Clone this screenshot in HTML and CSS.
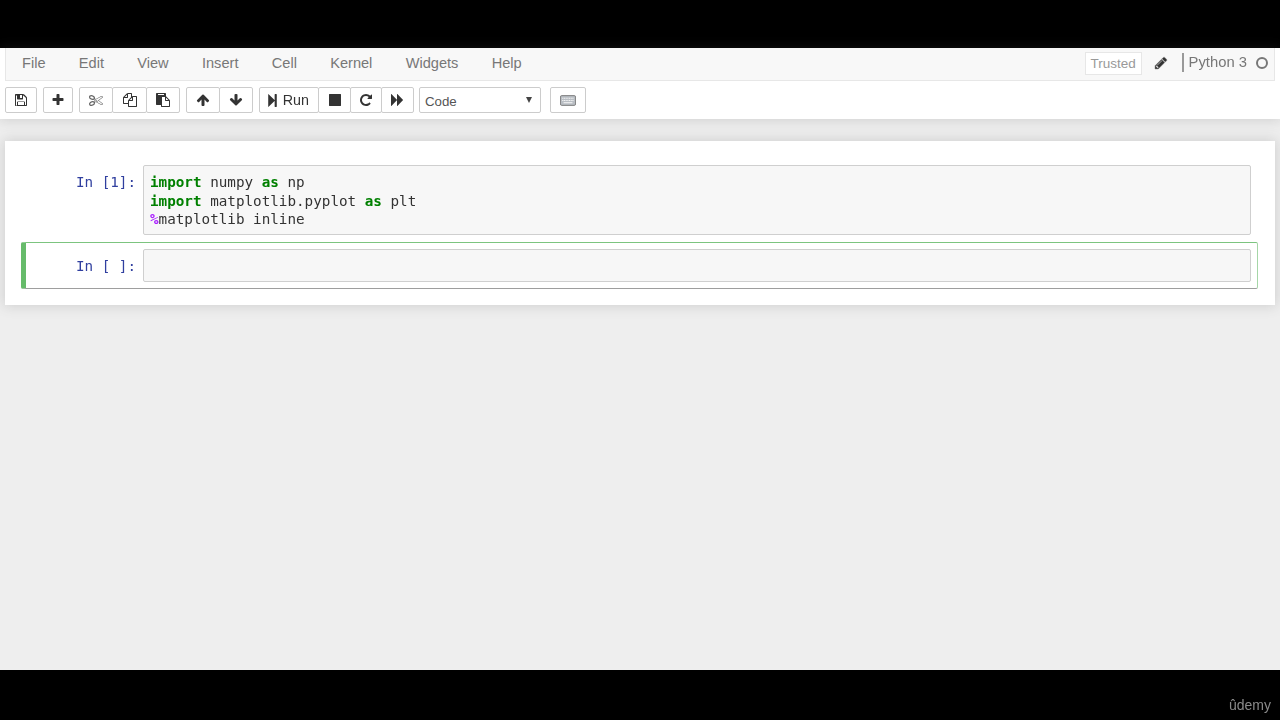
FILE: index.html
```html
<!DOCTYPE html>
<html lang="en">
<head>
<meta charset="utf-8">
<title>Notebook</title>
<link rel="stylesheet" href="styles.css">
</head>
<body>
<div class="letterbox-top"></div>
<header class="header">
  <nav class="menubar">
    <ul class="menu">
      <li>File</li><li>Edit</li><li>View</li><li>Insert</li><li>Cell</li><li>Kernel</li><li>Widgets</li><li>Help</li>
    </ul>
    <div class="status">
      <span class="trusted">Trusted</span>
      <svg class="ico pencil" viewBox="0 0 1792 1792"><path d="M491 1536l91-91-235-235-91 91v107h128v128h107zm523-928q0-22-22-22-10 0-17 7l-542 542q-7 7-7 17 0 22 22 22 10 0 17-7l542-542q7-7 7-17zm-54-192l416 416-832 832h-416v-416zm683 96q0 53-37 90l-166 166-416-416 166-165q36-38 90-38 53 0 91 38l235 234q37 39 37 91z"/></svg>
      <span class="kernel">Python 3</span>
      <span class="kernel-dot"></span>
    </div>
  </nav>
  <div class="toolbar">
    <div class="group"><button class="btn w-save"><svg class="ico" viewBox="0 0 1792 1792"><path d="M512 1536h768v-384h-768v384zm896 0h128v-840q0-14-10-38.500t-20-34.500l-281-281q-10-10-34-20t-39-10v416q0 40-28 68t-68 28h-576q-40 0-68-28t-28-68v-416h-128v1280h128v-416q0-40 28-68t68-28h832q40 0 68 28t28 68v416zm-384-928v-320q0-13-9.500-22.500t-22.500-9.500h-192q-13 0-22.500 9.500t-9.500 22.500v320q0 13 9.500 22.500t22.500 9.500h192q13 0 22.500-9.500t9.500-22.500zm640 32v928q0 40-28 68t-68 28h-1344q-40 0-68-28t-28-68v-1344q0-40 28-68t68-28h928q40 0 88 20t76 48l280 280q28 28 48 76t20 88z"/></svg></button></div>
    <div class="group"><button class="btn w-add"><svg class="ico" viewBox="0 0 1792 1792"><path d="M1600 736v192q0 40-28 68t-68 28h-416v416q0 40-28 68t-68 28h-192q-40 0-68-28t-28-68v-416h-416q-40 0-68-28t-28-68v-192q0-40 28-68t68-28h416v-416q0-40 28-68t68-28h192q40 0 68 28t28 68v416h416q40 0 68 28t28 68z"/></svg></button></div>
    <div class="group">
      <button class="btn w-edit"><svg class="ico light" viewBox="0 0 1792 1792"><path d="M960 896q26 0 45 19t19 45-19 45-45 19-45-19-19-45 19-45 45-19zm300 64l507 398q28 20 25 56-5 35-35 51l-128 64q-13 7-29 7-17 0-31-8l-690-387-110 66q-8 4-12 5 14 49 10 97-7 77-56 147.500t-132 123.500q-132 84-277 84-136 0-222-78-90-84-79-207 7-76 56-147t131-124q132-84 278-84 83 0 151 31 9-13 22-22l122-73-122-73q-13-9-22-22-68 31-151 31-146 0-278-84-82-53-131-124t-56-147q-5-59 15.500-113t63.500-93q85-79 222-79 145 0 277 84 83 52 132 123t56 148q4 48-10 97 4 1 12 5l110 66 690-387q14-8 31-8 16 0 29 7l128 64q30 16 35 51 3 36-25 56zm-681-260q46-42 21-108t-106-117q-92-59-192-59-74 0-113 36-46 42-21 108t106 117q92 59 192 59 74 0 113-36zm-85 745q81-51 106-117t-21-108q-39-36-113-36-100 0-192 59-81 51-106 117t21 108q39 36 113 36 100 0 192-59zm178-613l96 58v-11q0-36 33-56l14-8-79-47-26 26q-3 3-10 11t-12 12q-2 2-4 3.500t-3 2.500zm224 224l96 32 736-576-128-64-768 431v113l-160 96 9 8q2 2 7 6 4 4 11 12t11 12l26 26zm704 416l128-64-520-408-177 138q-2 3-13 7z"/></svg></button>
      <button class="btn w-edit"><svg class="ico copy" viewBox="0 0 1792 1792"><path d="M1696 384q40 0 68 28t28 68v1216q0 40-28 68t-68 28h-960q-40 0-68-28t-28-68v-288h-544q-40 0-68-28t-28-68v-672q0-40 20-88t48-76l408-408q28-28 76-48t88-20h416q40 0 68 28t28 68v328q68-40 128-40h416zm-544 213l-299 299h299v-299zm-640-384l-299 299h299v-299zm196 647l316-316v-416h-384v416q0 40-28 68t-68 28h-416v640h512v-256q0-40 20-88t48-76zm956 804v-1152h-384v416q0 40-28 68t-68 28h-416v640h896z"/></svg></button>
      <button class="btn w-edit"><svg class="ico" viewBox="0 0 1792 1792"><path d="M768 1664h896v-640h-416q-40 0-68-28t-28-68v-416h-384v1152zm256-1440v-64q0-13-9.500-22.500t-22.500-9.500h-704q-13 0-22.500 9.500t-9.500 22.500v64q0 13 9.500 22.500t22.500 9.500h704q13 0 22.500-9.500t9.500-22.500zm256 672h299l-299-299v299zm512 128v672q0 40-28 68t-68 28h-960q-40 0-68-28t-28-68v-160h-544q-40 0-68-28t-28-68v-1344q0-40 28-68t68-28h1088q40 0 68 28t28 68v328q21 13 36 28l408 408q28 28 48 76t20 88z"/></svg></button>
    </div>
    <div class="group">
      <button class="btn w-move"><svg class="ico" viewBox="0 0 1792 1792"><path d="M1675 971q0 51-37 90l-75 75q-38 38-91 38-54 0-90-38l-294-293v704q0 52-37.500 84.500t-90.500 32.500h-128q-53 0-90.500-32.500t-37.500-84.500v-704l-294 293q-36 38-90 38t-90-38l-75-75q-38-38-38-90 0-53 38-91l651-651q35-37 90-37 54 0 91 37l651 651q37 39 37 91z"/></svg></button>
      <button class="btn w-move"><svg class="ico" viewBox="0 0 1792 1792"><path d="M1675 832q0 53-37 90l-651 652q-39 37-91 37-53 0-90-37l-651-652q-38-36-38-90 0-53 38-91l74-75q39-37 91-37 53 0 90 37l294 294v-704q0-52 38-90t90-38h128q52 0 90 38t38 90v704l294-294q37-37 90-37 52 0 91 37l75 75q37 39 37 91z"/></svg></button>
    </div>
    <div class="group">
      <button class="btn w-run"><svg class="ico step" viewBox="0 0 1792 1792"><path d="M429 1651q-19 19-32 13t-13-32v-1472q0-26 13-32t32 13l710 710q9 9 13 19v-678q0-26 19-45t45-19h128q26 0 45 19t19 45v1408q0 26-19 45t-45 19h-128q-26 0-45-19t-19-45v-678q-4 10-13 19z"/></svg><span>Run</span></button>
      <button class="btn w-ctl"><svg class="ico stop" viewBox="0 0 1792 1792"><path d="M1664 192v1408q0 26-19 45t-45 19h-1408q-26 0-45-19t-19-45v-1408q0-26 19-45t45-19h1408q26 0 45 19t19 45z"/></svg></button>
      <button class="btn w-ctl"><svg class="ico" viewBox="0 0 1792 1792"><path d="M1664 256v448q0 26-19 45t-45 19h-448q-42 0-59-40-17-39 14-69l138-138q-148-137-349-137-104 0-198.500 40.500t-163.500 109.500-109.500 163.500-40.500 198.500 40.500 198.500 109.500 163.500 163.500 109.500 198.500 40.500q119 0 225-52t179-147q7-10 23-12 15 0 25 9l137 138q9 8 9.500 20.500t-7.500 22.500q-109 132-264 204.500t-327 72.500q-156 0-298-61t-245-164-164-245-61-298 61-298 164-245 245-164 298-61q147 0 284.500 55.500t244.500 156.500l130-129q29-31 70-14 39 17 39 59z"/></svg></button>
      <button class="btn w-ctl"><svg class="ico" viewBox="0 0 1792 1792"><path d="M45 1651q-19 19-32 13t-13-32v-1472q0-26 13-32t32 13l710 710q9 9 13 19v-710q0-26 13-32t32 13l710 710q19 19 19 45t-19 45l-710 710q-19 19-32 13t-13-32v-710q-4 10-13 19z"/></svg></button>
    </div>
    <div class="select"><span>Code</span><i class="caret"></i></div>
    <button class="btn w-kbd"><svg class="kbd" viewBox="0 0 18 12"><rect x="0.5" y="0.5" width="17" height="11" rx="1.5" fill="#b9bec4" stroke="#777"/><path d="M2.500 3.500h13M2.500 6h13" stroke="#f4f4f4" stroke-width="1.200" stroke-dasharray="1.300 .6"/><path d="M4 8.500h10" stroke="#f4f4f4" stroke-width="1.200"/></svg></button>
  </div>
</header>
<main class="site">
  <section class="notebook">
    <div class="cell">
      <div class="prompt">In&nbsp;[1]:</div>
      <div class="input"><span class="kw">import</span> numpy <span class="kw">as</span> np
<span class="kw">import</span> matplotlib.pyplot <span class="kw">as</span> plt
<span class="magic">%</span>matplotlib inline</div>
    </div>
    <div class="cell selected">
      <div class="prompt">In&nbsp;[&nbsp;]:</div>
      <div class="input"> </div>
    </div>
  </section>
</main>
<footer class="letterbox-bottom"><span class="brand">ûdemy</span></footer>
</body>
</html>
```
FILE: styles.css
```css
* { box-sizing: border-box; }
html, body { margin: 0; height: 720px; overflow: hidden; }
body {
  display: flex;
  flex-direction: column;
  background: #eee;
  font-family: "Liberation Sans", Arial, sans-serif;
  color: #333;
}
.letterbox-top { height: 48px; background: #000; flex: none; }
.letterbox-bottom {
  height: 50px;
  flex: none;
  background: #000;
  display: flex;
  justify-content: flex-end;
  align-items: flex-end;
  padding: 0 9px 7px 0;
}
.brand { color: #8a8a8a; font-size: 14px; line-height: 16px; filter: blur(.4px); }

.header {
  flex: none;
  background: #fff;
  height: 71px;
  box-shadow: 0 0 12px 1px rgba(87, 87, 87, .2);
  position: relative;
  filter: blur(.4px);
}
.menubar {
  margin: 0 5px;
  height: 33px;
  background: #f8f8f8;
  border: 1px solid #e7e7e7;
  border-top: 0;
  display: flex;
  justify-content: space-between;
  align-items: center;
  padding: 0 6px 3px 16px;
}
.menu {
  display: flex;
  gap: 33.300px;
  list-style: none;
  margin: 0;
  padding: 0;
  font-size: 14.600px;
  color: #777;
}
.status { display: flex; align-items: center; color: #777; font-size: 14.800px; }
.trusted {
  width: 57px;
  height: 23px;
  margin-top: 2px;
  border: 1px solid #e7e7e7;
  background: #fff;
  color: #999;
  font-size: 13.500px;
  line-height: 21px;
  text-align: center;
}
.pencil { width: 14px; height: 14px; margin: 0 14px 0 12px; fill: #888; stroke: #888; stroke-width: 60; }
.kernel { border-left: 2px solid #999; padding-left: 5px; line-height: 19px; }
.kernel-dot { width: 12px; height: 12px; margin-left: 9px; border: 2px solid #777; border-radius: 50%; }

.toolbar {
  height: 38px;
  display: flex;
  align-items: flex-start;
  padding: 6px 0 0 5px;
  gap: 6px;
}
.group { display: flex; }
.btn {
  height: 26px;
  margin: 0;
  padding: 0;
  background: #fff;
  border: 1px solid #ccc;
  border-radius: 2px;
  display: flex;
  align-items: center;
  justify-content: center;
  color: #333;
  font: 14.300px "Liberation Sans", Arial, sans-serif;
}
.group .btn + .btn { margin-left: -1px; }
.ico { width: 14px; height: 14px; fill: #333; flex: none; }
.ico.light { fill: #666; }
.ico.copy { margin-left: 2px; }
.ico.stop { margin-left: 1px; }
.w-save { width: 32px; }
.w-add { width: 30px; }
.w-edit { width: 34.300px; }
.w-move { width: 34px; }
.w-run { width: 60px; gap: 3px; padding-right: 4px; }
.w-ctl { width: 32.700px; }
.w-kbd { width: 36px; margin-left: 3px; }
.kbd { width: 16px; height: 11px; }
.step { width: 15px; height: 15px; }
.select {
  width: 122px;
  height: 26px;
  margin-left: -1px;
  border: 1px solid #ccc;
  border-radius: 2px;
  background: #fff;
  display: flex;
  align-items: center;
  justify-content: space-between;
  padding: 3px 8px 0 5px;
  font-size: 13.300px;
  color: #555;
}
.caret {
  width: 0;
  height: 0;
  margin-bottom: 4px;
  border-left: 3.500px solid transparent;
  border-right: 3.500px solid transparent;
  border-top: 6px solid #444;
}

.site { flex: 1; padding: 22px 5px 0; min-height: 0; }
.notebook {
  background: #fff;
  padding: 17px 17px 16px 16px;
  box-shadow: 0 0 12px 1px rgba(87, 87, 87, .2);
  filter: blur(.4px);
}
.cell {
  display: flex;
  padding: 6px;
  border: 1px solid transparent;
  border-radius: 2px;
}
.cell.selected {
  border-color: #7cc47f #a5d6a7 #9e9e9e #66bb6a;
  border-left-width: 5px;
  padding-left: 2px;
}
.prompt {
  flex: none;
  width: 115px;
  padding: 8px 7px 0 0;
  text-align: right;
  color: #303f9f;
  font: 14.270px/18.700px "DejaVu Sans Mono", monospace;
}
.input {
  flex: 1;
  min-height: 33px;
  padding: 7px 6px 5px;
  background: #f7f7f7;
  border: 1px solid #cfcfcf;
  border-radius: 2px;
  white-space: pre;
  color: #333;
  font: 14.270px/18.700px "DejaVu Sans Mono", monospace;
}
.cell.selected .input { height: 33px; }
.kw { color: #008000; font-weight: bold; }
.magic { color: #aa22ff; font-weight: bold; }
```
